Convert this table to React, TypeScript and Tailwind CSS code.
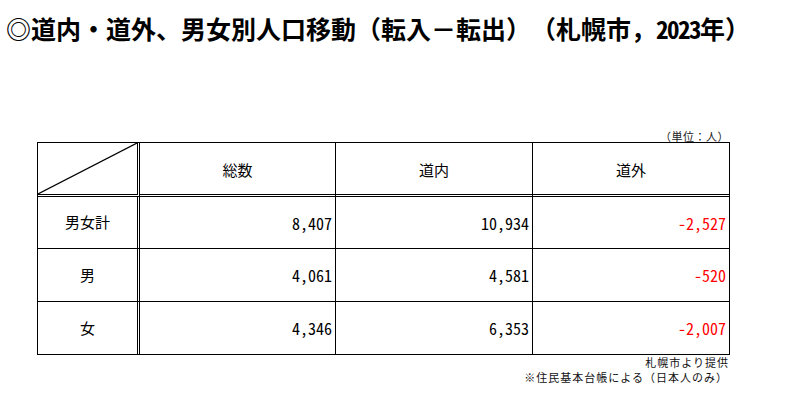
import React from "react";

const rows = [
  { label: "男女計", total: "8,407", inner: "10,934", outer: "-2,527" },
  { label: "男", total: "4,061", inner: "4,581", outer: "-520" },
  { label: "女", total: "4,346", inner: "6,353", outer: "-2,007" },
];

const rowHeights = ["h-[52px]", "h-[53px]", "h-[53px]"];

export default function App() {
  return (
    <div className="w-[804px] h-[408px] bg-white text-black font-['Noto_Sans_CJK_JP',sans-serif] overflow-hidden">
      <div className="pl-[6px] pt-[14px] text-[25px] leading-[28px] font-bold whitespace-nowrap [text-spacing-trim:space-all] [font-kerning:none]">
        ◎道内・道外、男女別人口移動（転入－転出）（札幌市，
        <span className="font-['Noto_Sans_Mono_CJK_JP','Liberation_Mono',monospace] tracking-[-1.5px]">2023</span>
        年）
      </div>
      <div className="ml-[37px] w-[693px]">
        <div className="mt-[88px] text-right text-[11px] leading-[12px] tracking-[0.5px] pr-[1px] text-[#222]">（単位：人）</div>
        <div className="grid grid-cols-[102px_196px_197px_197px] border-l border-t border-black">
          <div className="relative h-[54px] border-r-[3px] border-r-black border-double border-b-[3px] border-b-black">
            <svg className="absolute inset-0 w-full h-full" preserveAspectRatio="none" viewBox="0 0 100 100">
              <line x1="0" y1="100" x2="100" y2="0" stroke="black" strokeWidth="1.2" vectorEffect="non-scaling-stroke" />
            </svg>
          </div>
          {["総数", "道内", "道外"].map((h) => (
            <div key={h} className="h-[54px] border-r border-black border-b-[3px] border-b-black border-double flex items-center justify-center pt-[3px] text-[15px]">
              {h}
            </div>
          ))}
          {rows.map((r, i) => (
            <React.Fragment key={r.label}>
              <div className={`${rowHeights[i]} border-r-[3px] border-r-black border-double border-b border-b-black flex items-center justify-center text-[15px]`}>
                {r.label}
              </div>
              <div className={`${rowHeights[i]} border-r border-b border-black flex items-center justify-end pr-[3px] text-[16px] font-['Noto_Sans_Mono_CJK_JP','Liberation_Mono',monospace]`}>
                {r.total}
              </div>
              <div className={`${rowHeights[i]} border-r border-b border-black flex items-center justify-end pr-[3px] text-[16px] font-['Noto_Sans_Mono_CJK_JP','Liberation_Mono',monospace]`}>
                {r.inner}
              </div>
              <div className={`${rowHeights[i]} border-r border-b border-black flex items-center justify-end pr-[3px] text-[16px] text-[#ff0000] font-['Noto_Sans_Mono_CJK_JP','Liberation_Mono',monospace]`}>
                {r.outer}
              </div>
            </React.Fragment>
          ))}
        </div>
        <div className="text-right text-[11px] leading-[15px] tracking-[1px] pr-[1px] text-[#111]">
          <div>札幌市より提供</div>
          <div className="pr-[1px]">※住民基本台帳による（日本人のみ）</div>
        </div>
      </div>
    </div>
  );
}
